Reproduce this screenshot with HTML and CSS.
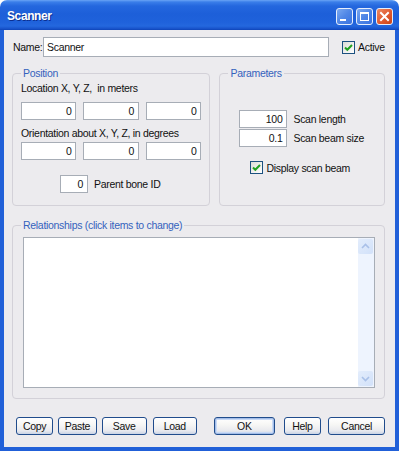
FILE: index.html
```html
<!DOCTYPE html>
<html>
<head>
<meta charset="utf-8">
<link rel="stylesheet" href="styles.css">
</head>
<body>
<div class="window">
  <div class="titlebar">
    <span class="title">Scanner</span>
    <div class="tb-buttons">
      <span class="tb-btn tb-min"><svg width="15" height="15" viewBox="0 0 15 15"><rect x="3" y="10" width="6" height="2" fill="#fff"/></svg></span>
      <span class="tb-btn tb-max"><svg width="15" height="15" viewBox="0 0 15 15"><rect x="3.5" y="3.5" width="8" height="8" fill="none" stroke="#fff" stroke-width="1"/><rect x="3" y="3" width="9" height="2" fill="#fff"/></svg></span>
      <span class="tb-btn tb-close"><svg width="15" height="15" viewBox="0 0 15 15"><path d="M4 4 L11 11 M11 4 L4 11" stroke="#fff" stroke-width="2" stroke-linecap="square"/></svg></span>
    </div>
  </div>
  <div class="frame">
    <div class="name-row">
      <span class="name-label">Name:</span>
      <div class="field name-field">Scanner</div>
      <span class="check active-check"><span class="cb"><svg width="13" height="13" viewBox="0 0 13 13"><path d="M3 6.5 L5.3 8.8 L10 4" fill="none" stroke="#21a121" stroke-width="2"/></svg></span>Active</span>
    </div>
    <div class="groups">
      <fieldset class="group pos">
        <legend>Position</legend>
        <div class="lbl">Location X, Y, Z, &nbsp;in meters</div>
        <div class="row3 first">
          <div class="field num">0</div>
          <div class="field num">0</div>
          <div class="field num">0</div>
        </div>
        <div class="lbl orient">Orientation about X, Y, Z, in degrees</div>
        <div class="row3 second">
          <div class="field num">0</div>
          <div class="field num">0</div>
          <div class="field num">0</div>
        </div>
        <div class="parent-row">
          <div class="field num small">0</div>
          <span class="after">Parent bone ID</span>
        </div>
      </fieldset>
      <fieldset class="group params">
        <legend>Parameters</legend>
        <div class="param-row p1">
          <div class="field num mid">100</div>
          <span class="after">Scan length</span>
        </div>
        <div class="param-row p2">
          <div class="field num mid">0.1</div>
          <span class="after">Scan beam size</span>
        </div>
        <span class="check beam-check"><span class="cb"><svg width="13" height="13" viewBox="0 0 13 13"><path d="M3 6.5 L5.3 8.8 L10 4" fill="none" stroke="#21a121" stroke-width="2"/></svg></span>Display scan beam</span>
      </fieldset>
    </div>
    <fieldset class="group rel">
      <legend>Relationships (click items to change)</legend>
      <div class="listbox">
        <div class="list-area"></div>
        <div class="vscroll">
          <span class="sb-btn"><svg width="15" height="15" viewBox="0 0 15 15"><path d="M4 9 L7.5 5.5 L11 9" fill="none" stroke="#a9c0e8" stroke-width="1.6"/></svg></span>
          <span class="sb-track"></span>
          <span class="sb-btn"><svg width="15" height="15" viewBox="0 0 15 15"><path d="M4 6 L7.5 9.5 L11 6" fill="none" stroke="#a9c0e8" stroke-width="1.6"/></svg></span>
        </div>
      </div>
    </fieldset>
    <div class="buttons">
      <span class="btn w-copy">Copy</span>
      <span class="btn w-paste">Paste</span>
      <span class="btn w-save">Save</span>
      <span class="btn w-load">Load</span>
      <span class="btn btn-default w-ok">OK</span>
      <span class="btn w-help">Help</span>
      <span class="btn w-cancel">Cancel</span>
    </div>
  </div>
</div>
</body>
</html>
```
FILE: styles.css
```css
* { box-sizing: border-box; }
html, body { margin: 0; padding: 0; background: #ffffff; }
body {
  font-family: "Liberation Sans", Arial, sans-serif;
  font-size: 10.5px;
  letter-spacing: -0.3px;
  color: #111;
}
.window {
  width: 399px;
  height: 451px;
  display: flex;
  flex-direction: column;
}
.titlebar {
  height: 30px;
  flex: none;
  display: flex;
  align-items: center;
  padding: 0 6px 0 7px;
  border-radius: 7px 7px 0 0;
  background: linear-gradient(to bottom, #6aa4f5 0px, #3a7ee9 2px, #2467de 6px, #1d5fd9 14px, #1f62db 22px, #2468de 26px, #1650c8 29px, #0d43b4 30px);
}
.title {
  flex: 1;
  color: #fff;
  font-family: "Liberation Sans", Arial, sans-serif;
  font-weight: bold;
  font-size: 12px;
  letter-spacing: -0.4px;
  text-shadow: 1px 1px 0 #0b2f8f;
  padding-top: 1px;
}
.tb-buttons { display: flex; gap: 3px; margin-top: 2px; }
.tb-btn {
  width: 17px;
  height: 17px;
  border: 1px solid #e6eefc;
  border-radius: 3px;
  display: flex;
  align-items: center;
  justify-content: center;
}
.tb-min, .tb-max {
  background: linear-gradient(135deg, #7aa8f0 0%, #4f86e6 50%, #3a73e0 100%);
}
.tb-close {
  background: linear-gradient(135deg, #ec8a62 0%, #e05a30 55%, #cc4416 100%);
}
.frame {
  flex: 1;
  border: 4px solid #2160d8;
  border-top: 0;
  background: #ecebee;
  display: flex;
  flex-direction: column;
  padding: 0 10px 0 8px;
}
.name-row {
  margin-top: 7px;
  height: 20px;
  display: flex;
  align-items: center;
}
.name-label { width: 31px; padding-left: 1px; }
.field {
  background: #fff;
  border: 1px solid #a7adb6;
  height: 18px;
  line-height: 16px;
}
.name-field {
  width: 286px;
  height: 20px;
  line-height: 18px;
  padding-left: 3px;
}
.check { display: flex; align-items: center; }
.cb {
  width: 13px;
  height: 13px;
  border: 1px solid #1c5180;
  background: linear-gradient(135deg, #dcdcd7, #ffffff);
  display: flex;
  align-items: center;
  justify-content: center;
  margin-right: 3px;
}
.cb svg { flex: none; }
.active-check { margin-left: 13px; }
.groups {
  display: flex;
  gap: 9px;
  margin-top: 9px;
}
fieldset.group {
  margin: 0;
  padding: 1px 8px 0 8px;
  border: 1px solid #d3d1d8;
  border-radius: 4px;
  min-width: 0;
}
legend {
  padding: 0 2px;
  line-height: 14px;
  color: #3462bd;
}
fieldset.pos { width: 199px; height: 140px; }
fieldset.params { width: 166px; height: 140px; }
.lbl { line-height: 14px; }
.row3 { display: flex; gap: 7px; }
.row3.first { margin-top: 7px; }
.row3.second { margin-top: 2px; }
.lbl.orient { margin-top: 6px; }
.num { width: 56px; text-align: right; padding-right: 4px; }
.num.small { width: 28px; }
.num.mid { width: 48px; }
.parent-row {
  margin-top: 15px;
  margin-left: 39px;
  display: flex;
  align-items: center;
}
.after { margin-left: 6px; }
.param-row {
  margin-left: 11px;
  display: flex;
  align-items: center;
}
.param-row.p1 { margin-top: 29px; }
.param-row.p2 { margin-top: 1px; }
.beam-check { margin-left: 22px; margin-top: 14px; }
fieldset.rel {
  margin-top: 12px;
  height: 181px;
  padding-top: 5px;
}
.listbox {
  margin-left: 2px;
  width: 352px;
  height: 151px;
  border: 1px solid #a7adb6;
  background: #fff;
  display: flex;
}
.list-area { flex: 1; }
.vscroll {
  width: 16px;
  display: flex;
  flex-direction: column;
  background: #eef4fe;
  padding: 1px 0;
}
.sb-btn {
  width: 15px;
  height: 15px;
  border-radius: 2px;
  background: linear-gradient(135deg, #e3edfc, #d2e1f9);
  display: flex;
}
.sb-track { flex: 1; }
.buttons {
  margin-top: 18px;
  margin-left: 4px;
  display: flex;
  gap: 5px;
}
.btn {
  height: 18px;
  border: 1px solid #204c8c;
  border-radius: 3px;
  background: linear-gradient(to bottom, #ffffff 0%, #f7f7f5 40%, #e8e9ee 80%, #c9d3e6 100%);
  display: flex;
  align-items: center;
  justify-content: center;
}
.btn-default {
  box-shadow: inset 0 0 0 1px #a3bde8, inset 0 0 0 2px #c9daf6;
}
.w-copy { width: 38px; }
.w-paste { width: 39px; }
.w-save { width: 46px; }
.w-load { width: 45px; margin-left: 1px; }
.w-ok { width: 62px; margin-left: 12px; }
.w-help { width: 38px; margin-left: 4px; }
.w-cancel { width: 58px; margin-left: 2px; }
```
